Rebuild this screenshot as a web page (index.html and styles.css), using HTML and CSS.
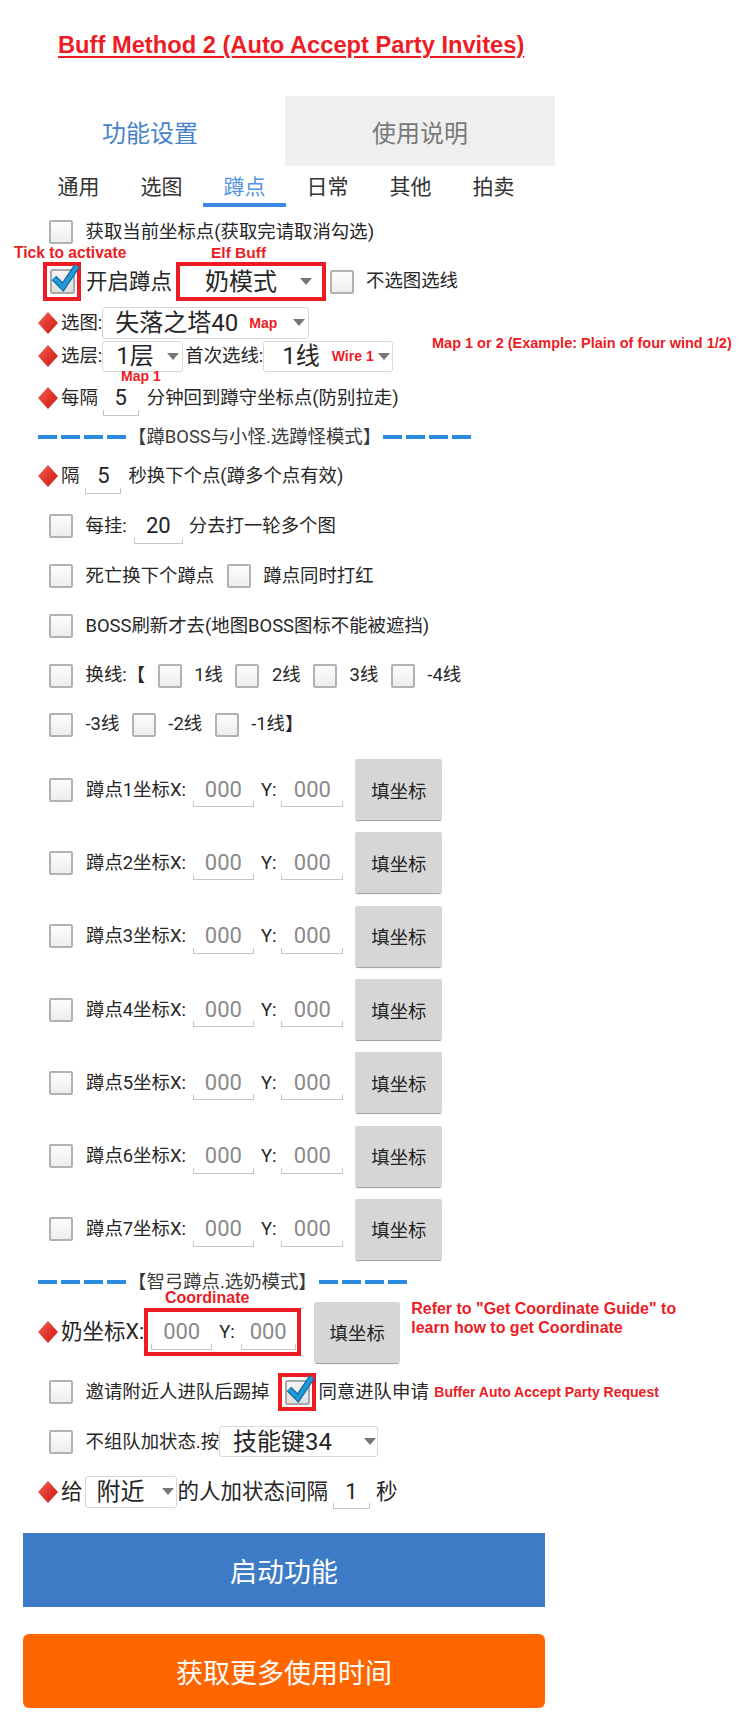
FILE: index.html
```html
<!DOCTYPE html>
<html lang="zh-CN">
<head>
    <meta charset="UTF-8">
    <meta name="viewport" content="width=device-width, initial-scale=1.0">
    <title>Buff Method 2</title>
    <link rel="stylesheet" href="styles.css">
</head>
<body>
<svg class="defs" width="0" height="0" aria-hidden="true">
    <defs>
        <linearGradient id="diaFill" x1="0" y1="0" x2="1" y2="1">
            <stop offset="0" stop-color="#f4675c"/>
            <stop offset="0.5" stop-color="#e3362c"/>
            <stop offset="1" stop-color="#c21f18"/>
        </linearGradient>
        <linearGradient id="boxFill" x1="0" y1="0" x2="0" y2="1">
            <stop offset="0" stop-color="#f6f6f6"/>
            <stop offset="1" stop-color="#dedede"/>
        </linearGradient>
        <path id="dia" d="M10 0 L20 11 L10 22 L0 11 Z" fill="url(#diaFill)"/>
        <g id="tick">
            <rect x="1" y="1" width="23" height="23" rx="1.5" fill="url(#boxFill)" stroke="#a9a9a9" stroke-width="2"/>
            <path d="M4 9 L13 18 L27 -3" fill="none" stroke="#16679a" stroke-width="6.5"/>
            <path d="M4 9 L13 18 L27 -3" fill="none" stroke="#1e9ad8" stroke-width="4"/>
        </g>
    </defs>
</svg>

<div class="page">
    <h1 class="title">Buff Method 2 (Auto Accept Party Invites)</h1>

    <div class="tabs">
        <div class="tab active">功能设置</div>
        <div class="tab off">使用说明</div>
    </div>

    <div class="subtabs">
        <div class="subtab">通用</div>
        <div class="subtab">选图</div>
        <div class="subtab on">蹲点</div>
        <div class="subtab">日常</div>
        <div class="subtab">其他</div>
        <div class="subtab">拍卖</div>
    </div>

    <div class="form">
        <div class="row cbrow">
            <span class="cb"></span>
            <span class="lbl">获取当前坐标点(获取完请取消勾选)</span>
        </div>

        <div class="row pick">
            <span class="mark mark-cb"><svg class="cb-on" viewBox="0 0 25 25"><use href="#tick"/></svg></span>
            <span class="lbl lg">开启蹲点</span>
            <span class="mark mark-spin">
                <span class="spin-in">奶模式<i class="arrow"></i></span>
            </span>
            <span class="cb"></span>
            <span class="lbl">不选图选线</span>
        </div>

        <div class="row sel">
            <svg class="dia" viewBox="0 0 20 22"><use href="#dia"/></svg>
            <span class="lbl key">选图:</span>
            <span class="spin map-spin">失落之塔40<em class="tag">Map</em><i class="arrow"></i></span>
        </div>

        <div class="row sel">
            <svg class="dia" viewBox="0 0 20 22"><use href="#dia"/></svg>
            <span class="lbl key">选层:</span>
            <span class="spin floor-spin">1层<i class="arrow"></i></span>
            <span class="lbl first">首次选线:</span>
            <span class="spin line-spin">1线<em class="tag">Wire 1</em><i class="arrow"></i></span>
        </div>

        <div class="row back">
            <svg class="dia" viewBox="0 0 20 22"><use href="#dia"/></svg>
            <span class="lbl key">每隔</span>
            <span class="edit w36">5</span>
            <span class="lbl">分钟回到蹲守坐标点(防别拉走)</span>
        </div>

        <div class="sep">
            <span class="dash"></span>
            <span class="sep-text">【蹲BOSS与小怪.选蹲怪模式】</span>
            <span class="dash"></span>
        </div>

        <div class="row every">
            <svg class="dia" viewBox="0 0 20 22"><use href="#dia"/></svg>
            <span class="lbl key">隔</span>
            <span class="edit w36">5</span>
            <span class="lbl">秒换下个点(蹲多个点有效)</span>
        </div>

        <div class="row cbrow hang">
            <span class="cb"></span>
            <span class="lbl">每挂:</span>
            <span class="edit w49">20</span>
            <span class="lbl">分去打一轮多个图</span>
        </div>

        <div class="row cbrow">
            <span class="cb"></span>
            <span class="lbl">死亡换下个蹲点</span>
            <span class="cb"></span>
            <span class="lbl">蹲点同时打红</span>
        </div>

        <div class="row cbrow">
            <span class="cb"></span>
            <span class="lbl">BOSS刷新才去(地图BOSS图标不能被遮挡)</span>
        </div>

        <div class="row cbrow lines">
            <span class="cb"></span>
            <span class="lbl">换线:【</span>
            <span class="cb"></span>
            <span class="lbl">1线</span>
            <span class="cb"></span>
            <span class="lbl">2线</span>
            <span class="cb"></span>
            <span class="lbl">3线</span>
            <span class="cb"></span>
            <span class="lbl">-4线</span>
        </div>

        <div class="row cbrow lines">
            <span class="cb"></span>
            <span class="lbl">-3线</span>
            <span class="cb"></span>
            <span class="lbl">-2线</span>
            <span class="cb"></span>
            <span class="lbl">-1线】</span>
        </div>

        <div class="coords">
            <div class="row coord">
                <span class="cb"></span>
                <span class="lbl">蹲点1坐标X:</span>
                <span class="edit hint w61">000</span>
                <span class="lbl ylbl">Y:</span>
                <span class="edit hint w62">000</span>
                <span class="fill">填坐标</span>
            </div>
            <div class="row coord">
                <span class="cb"></span>
                <span class="lbl">蹲点2坐标X:</span>
                <span class="edit hint w61">000</span>
                <span class="lbl ylbl">Y:</span>
                <span class="edit hint w62">000</span>
                <span class="fill">填坐标</span>
            </div>
            <div class="row coord">
                <span class="cb"></span>
                <span class="lbl">蹲点3坐标X:</span>
                <span class="edit hint w61">000</span>
                <span class="lbl ylbl">Y:</span>
                <span class="edit hint w62">000</span>
                <span class="fill">填坐标</span>
            </div>
            <div class="row coord">
                <span class="cb"></span>
                <span class="lbl">蹲点4坐标X:</span>
                <span class="edit hint w61">000</span>
                <span class="lbl ylbl">Y:</span>
                <span class="edit hint w62">000</span>
                <span class="fill">填坐标</span>
            </div>
            <div class="row coord">
                <span class="cb"></span>
                <span class="lbl">蹲点5坐标X:</span>
                <span class="edit hint w61">000</span>
                <span class="lbl ylbl">Y:</span>
                <span class="edit hint w62">000</span>
                <span class="fill">填坐标</span>
            </div>
            <div class="row coord">
                <span class="cb"></span>
                <span class="lbl">蹲点6坐标X:</span>
                <span class="edit hint w61">000</span>
                <span class="lbl ylbl">Y:</span>
                <span class="edit hint w62">000</span>
                <span class="fill">填坐标</span>
            </div>
            <div class="row coord">
                <span class="cb"></span>
                <span class="lbl">蹲点7坐标X:</span>
                <span class="edit hint w61">000</span>
                <span class="lbl ylbl">Y:</span>
                <span class="edit hint w62">000</span>
                <span class="fill">填坐标</span>
            </div>
        </div>

        <div class="sep sep2">
            <span class="dash"></span>
            <span class="sep-text">【智弓蹲点.选奶模式】</span>
            <span class="dash"></span>
        </div>

        <div class="row milk">
            <svg class="dia" viewBox="0 0 20 22"><use href="#dia"/></svg>
            <span class="lbl xl">奶坐标X:</span>
            <span class="mark mark-xy">
                <span class="edit hint w61">000</span>
                <span class="lbl ylbl">Y:</span>
                <span class="edit hint w55">000</span>
            </span>
            <span class="fill">填坐标</span>
            <span class="note refer">Refer to "Get Coordinate Guide" to<br>learn how to get Coordinate</span>
        </div>

        <div class="row cbrow invite">
            <span class="cb"></span>
            <span class="lbl">邀请附近人进队后踢掉</span>
            <span class="mark mark-cb2"><svg class="cb-on" viewBox="0 0 25 25"><use href="#tick"/></svg></span>
            <span class="lbl agree">同意进队申请</span>
            <span class="note buffer">Buffer Auto Accept Party Request</span>
        </div>

        <div class="row cbrow party">
            <span class="cb"></span>
            <span class="lbl">不组队加状态.按</span>
            <span class="spin key-spin">技能键34<i class="arrow"></i></span>
        </div>

        <div class="row give">
            <svg class="dia" viewBox="0 0 20 22"><use href="#dia"/></svg>
            <span class="lbl lg key">给</span>
            <span class="spin near-spin">附近<i class="arrow"></i></span>
            <span class="lbl lg">的人加状态间隔</span>
            <span class="edit w37">1</span>
            <span class="lbl lg sec">秒</span>
        </div>
    </div>

    <div class="btn btn-start">启动功能</div>
    <div class="btn btn-more">获取更多使用时间</div>

    <!-- red notes drawn over the screenshot -->
    <span class="note float n-tick">Tick to activate</span>
    <span class="note float n-elf">Elf Buff</span>
    <span class="note float n-plain">Map 1 or 2 (Example: Plain of four wind 1/2)</span>
    <span class="note float n-map1">Map 1</span>
    <span class="note float n-coord">Coordinate</span>
</div>
</body>
</html>
```

FILE: styles.css
```css
body {
    margin: 0;
    background: #fff;
    color: #262626;
    font-family: Roboto, "Noto Sans CJK SC", sans-serif;
}
.defs {
    position: absolute;
    width: 0;
    height: 0;
}
.page {
    position: relative;
    width: 748px;
    height: 1736px;
    overflow: hidden;
}

/* title written over the screenshot */
.title {
    margin: 30px 0 0 58px;
    font-family: "Liberation Sans", Arial, sans-serif;
    font-size: 23.7px;
    line-height: 30px;
    font-weight: bold;
    color: #ee1c24;
    text-decoration: underline;
    text-decoration-thickness: 2px;
    text-underline-offset: 3px;
}

/* top tabs */
.tabs {
    display: flex;
    margin: 36px 0 0 15px;
}
.tab {
    width: 270px;
    height: 70px;
    display: flex;
    align-items: center;
    justify-content: center;
    font-size: 24px;
}
.tab.active {
    color: #4683c9;
}
.tab.off {
    background: #efefef;
    color: #7a7a7a;
}

.subtabs {
    display: flex;
    margin-left: 37px;
}
.subtab {
    width: 83px;
    padding-top: 5px;
    line-height: 32px;
    text-align: center;
    font-size: 21px;
    color: #333;
    border-bottom: 4px solid transparent;
}
.subtab.on {
    color: #5495e2;
    border-bottom-color: #3d89e8;
}

/* form rows */
.form {
    margin-left: 38px;
}
.row {
    display: flex;
    align-items: center;
    height: 50px;
    font-size: 18.4px;
    white-space: nowrap;
}
.row.cbrow {
    padding-left: 11px;
    gap: 12.5px;
}
.row.pick {
    height: 49px;
    padding-left: 5px;
}
.row.sel {
    height: 33.5px;
}
.row.lines {
    height: 49px;
}
.row.milk {
    height: 68px;
}
.row.invite {
    height: 52px;
}
.row.party {
    height: 47px;
}
.row.give {
    height: 53px;
}

.lbl {
    flex: none;
    line-height: 1.2;
}
.lbl.lg {
    font-size: 21.5px;
}
.lbl.xl {
    font-size: 21.5px;
    margin-left: 3px;
}
.lbl.key {
    margin-left: 3px;
}

.dia {
    width: 20px;
    height: 22px;
    flex: none;
}

.cb {
    width: 24px;
    height: 24px;
    box-sizing: border-box;
    flex: none;
    border: 2px solid #b2b2b2;
    border-radius: 2px;
    background: linear-gradient(#fdfdfd, #ededed);
}
.cb-on {
    width: 25px;
    height: 25px;
    overflow: visible;
}

/* red annotation frames */
.mark {
    box-sizing: border-box;
    display: flex;
    align-items: center;
    justify-content: center;
    flex: none;
    border: 4px solid #ed1c24;
}
.mark-cb {
    width: 38px;
    height: 39px;
}
.mark-cb2 {
    width: 38px;
    height: 38px;
    margin-left: -3.5px;
}
.mark-spin {
    width: 150px;
    height: 39px;
    margin-left: 4px;
    justify-content: flex-start;
}
.row.pick .lbl.lg {
    margin-left: 5px;
}
.row.pick .cb {
    margin-left: 4px;
}
.row.pick .lbl:last-child {
    margin-left: 12px;
}
.spin-in {
    display: flex;
    align-items: center;
    width: 100%;
    padding: 0 10px 0 25px;
    font-size: 24px;
    line-height: 1;
}
.mark-xy {
    width: 157px;
    height: 48px;
    justify-content: flex-start;
    padding-left: 3px;
}
.mark-xy .ylbl {
    margin: 0 6px 0 7px;
}

/* spinners */
.spin {
    box-sizing: border-box;
    display: flex;
    align-items: center;
    flex: none;
    background: #fff;
    border: 1px solid #d8d8d8;
    border-radius: 3px;
    font-size: 24px;
    line-height: 1;
}
.arrow {
    margin-left: auto;
    width: 0;
    height: 0;
    border-left: 6px solid transparent;
    border-right: 6px solid transparent;
    border-top: 7px solid #777;
}
.map-spin {
    width: 207px;
    height: 32px;
    padding: 0 3px 0 12px;
}
.floor-spin {
    width: 81px;
    height: 31px;
    padding: 0 3px 0 13px;
}
.line-spin {
    width: 130px;
    height: 31px;
    padding: 0 2px 0 18px;
}
.lbl.first {
    margin-left: 2px;
}
.key-spin {
    width: 159px;
    height: 31px;
    padding: 0 1px 0 13px;
    margin-left: -12.5px;
}
.near-spin {
    width: 92px;
    height: 32px;
    padding: 0 2px 0 11px;
    margin: 0 1px 0 2px;
}

/* android style edit boxes */
.edit {
    position: relative;
    flex: none;
    height: 35px;
    display: flex;
    align-items: center;
    justify-content: center;
    font-size: 22px;
    line-height: 1;
    color: #222;
}
.edit::after {
    content: "";
    position: absolute;
    left: 0;
    right: 0;
    bottom: 0;
    height: 5px;
    border: 1px solid #c6c6c6;
    border-top: none;
}
.edit.hint {
    color: #8a8a8a;
}
.w36 { width: 36px; }
.w37 { width: 37px; }
.w49 { width: 49px; }
.w55 { width: 55px; }
.w61 { width: 61px; }
.w62 { width: 62px; }

.row.back .edit {
    margin: 0 8px 0 5px;
}
.row.every .edit {
    margin: 0 7px 0 6px;
}
.row.hang .edit {
    margin: 0 -6.5px 0 -5.5px;
}
.row.give .edit {
    margin: 0 6px 0 5px;
}

/* section separators */
.sep {
    display: flex;
    align-items: center;
    height: 28px;
    font-size: 18.4px;
    color: #3a3a3a;
}
.sep.sep2 {
    height: 32px;
}
.dash {
    width: 88px;
    height: 4px;
    background: repeating-linear-gradient(90deg, #2c8ae0 0 19px, transparent 19px 23px);
}
.sep-text {
    margin: 0 2px;
    line-height: 16px;
}

/* coordinate rows */
.coords {
    margin-top: 4px;
}
.row.coord {
    height: 73.3px;
    padding-left: 11px;
}
.row.coord .lbl {
    margin-left: 13px;
}
.row.coord .edit.w61 {
    margin-left: 7px;
}
.row.coord .lbl.ylbl {
    margin: 0 5px 0 7px;
}
.fill {
    flex: none;
    width: 87px;
    height: 61px;
    display: flex;
    align-items: center;
    justify-content: center;
    margin-left: 12px;
    background: #d6d6d6;
    border-radius: 2px;
    box-shadow: 0 2px 1px -1px #9c9c9c;
    font-size: 18.4px;
    color: #222;
}
.row.milk .fill {
    width: 86px;
    margin-left: 13px;
}

.row.invite .lbl.agree {
    margin-left: -10.5px;
}

/* red notes */
.note {
    font-family: "Liberation Sans", Arial, sans-serif;
    font-weight: bold;
    font-style: normal;
    color: #ec1c24;
    white-space: nowrap;
}
.tag {
    font-family: "Liberation Sans", Arial, sans-serif;
    font-weight: bold;
    font-style: normal;
    font-size: 14px;
    color: #ec1c24;
    margin-left: 11px;
}
.line-spin .tag {
    margin-left: 12px;
}
.refer {
    align-self: flex-start;
    margin: 1px 0 0 11px;
    font-size: 16px;
    line-height: 19px;
}
.buffer {
    font-size: 14px;
    margin-left: -7px;
}
.float {
    position: absolute;
    line-height: 12px;
}
.n-tick {
    left: 14px;
    top: 247px;
    font-size: 15.6px;
}
.n-elf {
    left: 211px;
    top: 247px;
    font-size: 15.5px;
}
.n-plain {
    left: 432px;
    top: 337px;
    font-size: 14.5px;
}
.n-map1 {
    left: 121px;
    top: 370px;
    font-size: 14px;
}
.n-coord {
    left: 165px;
    top: 1291.5px;
    font-size: 16px;
}

/* bottom buttons */
.btn {
    display: flex;
    align-items: center;
    justify-content: center;
    width: 522px;
    height: 74px;
    margin-left: 23px;
    color: #fff;
    font-size: 27px;
}
.btn-start {
    margin-top: 15px;
    background: #3d7bc7;
}
.btn-more {
    margin-top: 27px;
    background: #ff6600;
    border-radius: 6px;
}
```
